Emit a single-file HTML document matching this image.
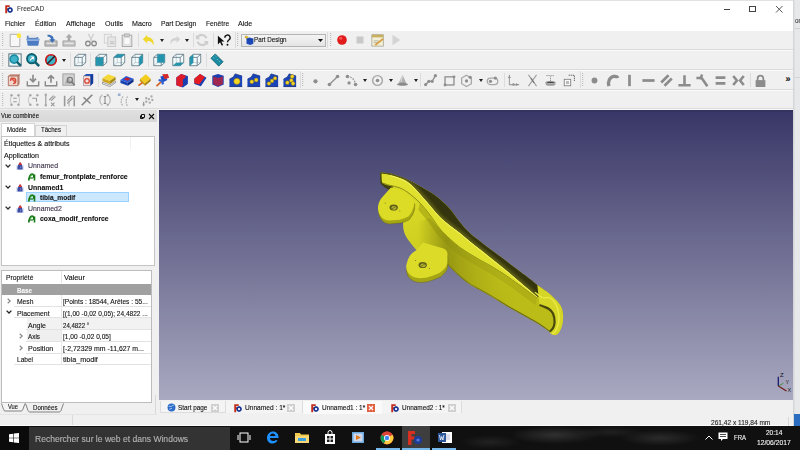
<!DOCTYPE html><html><head><meta charset="utf-8"><style>
*{box-sizing:border-box}
html,body{margin:0;padding:0}
body{width:800px;height:450px;overflow:hidden;position:relative;background:#f0f0f0;font-family:"Liberation Sans",sans-serif;color:#000}
.a{position:absolute;overflow:visible}
.t{position:absolute;white-space:nowrap;line-height:1;-webkit-text-stroke:0.12px currentColor}
</style></head><body>
<div class="a" style="left:0px;top:0px;width:793px;height:31px;background:#fff"></div>
<div class="a" style="left:0px;top:0px;width:793px;height:1px;background:#e2e2e2"></div>
<svg class="a" style="left:5px;top:5px" width="8" height="8" viewBox="0 0 10 10"><path d="M0.3 0.3h5.6v2.3H2.7v1.5h2.6v2.2H2.7v3.9H0.3z" fill="#c4301c"/><circle cx="6.3" cy="6.3" r="2.4" fill="#fff" stroke="#1a3692" stroke-width="1.9"/><path d="M6.3 2.9v1M6.3 8.7v1M2.9 6.3h1M8.7 6.3h1" stroke="#1a3692" stroke-width="1.2"/></svg>
<div class="t" style="left:16.90px;top:5.30px;font-size:7.8px;color:#3a3a3a;letter-spacing:0.000px;transform:scaleX(0.8336);transform-origin:0.00px 0;">FreeCAD</div>
<div class="a" style="left:723.5px;top:8.6px;width:6.5px;height:1px;background:#444"></div>
<div class="a" style="left:749px;top:5.5px;width:7px;height:6.5px;border:1px solid #444"></div>
<svg class="a" style="left:776px;top:5.5px" width="6.5" height="6.5" viewBox="0 0 6.5 6.5"><path d="M0 0L6.5 6.5M6.5 0L0 6.5" stroke="#444" stroke-width="0.9"/></svg>
<div class="t" style="left:4.75px;top:19.81px;font-size:7.9px;color:#141414;letter-spacing:0.000px;transform:scaleX(0.8541);transform-origin:0.00px 0;">Fichier</div>
<div class="t" style="left:34.75px;top:19.81px;font-size:7.9px;color:#141414;letter-spacing:0.000px;transform:scaleX(0.8755);transform-origin:0.00px 0;">Édition</div>
<div class="t" style="left:65.90px;top:19.81px;font-size:7.9px;color:#141414;letter-spacing:0.000px;transform:scaleX(0.8950);transform-origin:0.00px 0;">Affichage</div>
<div class="t" style="left:104.60px;top:19.81px;font-size:7.9px;color:#141414;letter-spacing:0.000px;transform:scaleX(0.8964);transform-origin:0.00px 0;">Outils</div>
<div class="t" style="left:132.20px;top:19.81px;font-size:7.9px;color:#141414;letter-spacing:0.000px;transform:scaleX(0.9022);transform-origin:0.00px 0;">Macro</div>
<div class="t" style="left:161.40px;top:19.81px;font-size:7.9px;color:#141414;letter-spacing:0.000px;transform:scaleX(0.8552);transform-origin:0.00px 0;">Part Design</div>
<div class="t" style="left:206.30px;top:19.81px;font-size:7.9px;color:#141414;letter-spacing:0.000px;transform:scaleX(0.8522);transform-origin:0.00px 0;">Fenêtre</div>
<div class="t" style="left:238.20px;top:19.81px;font-size:7.9px;color:#141414;letter-spacing:0.000px;transform:scaleX(0.8983);transform-origin:0.00px 0;">Aide</div>
<div class="a" style="left:0px;top:31px;width:793px;height:78px;background:#f0f0f0"></div>
<div class="a" style="left:0px;top:49px;width:793px;height:1px;background:#dadada"></div>
<div class="a" style="left:0px;top:50px;width:793px;height:1px;background:#fafafa"></div>
<div class="a" style="left:0px;top:69px;width:793px;height:1px;background:#dadada"></div>
<div class="a" style="left:0px;top:70px;width:793px;height:1px;background:#fafafa"></div>
<div class="a" style="left:0px;top:89px;width:793px;height:1px;background:#dadada"></div>
<div class="a" style="left:0px;top:90px;width:793px;height:1px;background:#fafafa"></div>
<div class="a" style="left:0px;top:108px;width:793px;height:1px;background:#dadada"></div>
<div class="a" style="left:0px;top:109px;width:793px;height:1px;background:#fafafa"></div>
<svg class="a" style="left:2px;top:33px" width="2" height="14" viewBox="0 0 2 14"><rect x="0" y="0" width="1.2" height="1" fill="#bdbdbd"/><rect x="0" y="2" width="1.2" height="1" fill="#bdbdbd"/><rect x="0" y="4" width="1.2" height="1" fill="#bdbdbd"/><rect x="0" y="6" width="1.2" height="1" fill="#bdbdbd"/><rect x="0" y="8" width="1.2" height="1" fill="#bdbdbd"/><rect x="0" y="10" width="1.2" height="1" fill="#bdbdbd"/><rect x="0" y="12" width="1.2" height="1" fill="#bdbdbd"/></svg>
<svg class="a" style="left:7.8px;top:33.0px" width="14" height="14" viewBox="0 0 16 16"><path d="M2.5 1.5h9l2 2v12h-11z" fill="#f7f7f7" stroke="#a8a8a8"/><circle cx="12.5" cy="3" r="2.6" fill="#ffe83a"/></svg>
<svg class="a" style="left:26.0px;top:33.0px" width="14" height="14" viewBox="0 0 16 16"><path d="M1 3h5l1.5 1.5H14v3H1z" fill="#5f88c8"/><path d="M0.5 6.5h15l-1.5 8h-12z" fill="#4d7bc2"/><path d="M1 7h14l-0.5 2H1.5z" fill="#8fb0e0"/><rect x="3" y="1.5" width="9" height="4" fill="#e8e8e8"/></svg>
<svg class="a" style="left:44.1px;top:33.0px" width="14" height="14" viewBox="0 0 16 16"><path d="M1 9h14v6H1z" fill="#bdbdbd" stroke="#8a8a8a" stroke-width="0.8"/><rect x="3" y="11" width="10" height="1.5" fill="#e4e4e4"/><path d="M4 2c5 0 7 2 7 5h2l-3.5 4-3.5-4h2c0-2-2-3-4-3z" fill="#3d70b8"/></svg>
<svg class="a" style="left:62.0px;top:33.0px" width="14" height="14" viewBox="0 0 16 16"><path d="M1 9h14v6H1z" fill="#c4c4c4" stroke="#9a9a9a" stroke-width="0.8"/><rect x="3" y="11" width="10" height="1.5" fill="#e8e8e8"/><path d="M8 1l4 4h-2.5v4h-3v-4H4z" fill="#a8a8a8"/></svg>
<svg class="a" style="left:84.0px;top:33.0px" width="14" height="14" viewBox="0 0 16 16"><path d="M5 1l4 8M11 1L7 9" stroke="#d0d0d0" stroke-width="1.5"/><circle cx="4.5" cy="12" r="2.6" fill="none" stroke="#8c8c8c" stroke-width="1.5"/><circle cx="11.5" cy="12" r="2.6" fill="none" stroke="#8c8c8c" stroke-width="1.5"/></svg>
<svg class="a" style="left:102.7px;top:33.0px" width="14" height="14" viewBox="0 0 16 16"><rect x="1.5" y="1.5" width="8" height="10" fill="#efefef" stroke="#cfcfcf"/><rect x="5.5" y="4.5" width="9" height="11" fill="#e6e6e6" stroke="#c8c8c8"/><path d="M8 10h5M8 12h5" stroke="#bdbdbd"/></svg>
<svg class="a" style="left:120.2px;top:33.0px" width="14" height="14" viewBox="0 0 16 16"><rect x="2.5" y="2.5" width="11" height="13" fill="#ececec" stroke="#a0a0a0"/><rect x="5" y="1" width="6" height="3" fill="#cfcfcf" stroke="#999" stroke-width="0.6"/><rect x="4.5" y="5.5" width="7" height="8" fill="#fafafa" stroke="#c0c0c0" stroke-width="0.6"/></svg>
<svg class="a" style="left:141.7px;top:33.0px" width="14" height="14" viewBox="0 0 16 16"><path d="M6 2L1 7l5 5V9c4 0 6 1.5 7 5.5c1.5-6-2-10-7-10z" fill="#f0d82a"/></svg>
<svg class="a" style="left:167.1px;top:33.0px" width="14" height="14" viewBox="0 0 16 16"><path d="M11 3l4 4-4 4V8.5c-4 0-6 1-7 5c-1-5 2-8 7-8z" fill="#d2d2d2"/></svg>
<svg class="a" style="left:195.4px;top:33.0px" width="14" height="14" viewBox="0 0 16 16"><path d="M13 6A5.5 5.5 0 0 0 3 5M3 10a5.5 5.5 0 0 0 10 1" stroke="#cdcdcd" stroke-width="2.5" fill="none"/><path d="M1 2v5h5zM15 14V9h-5z" fill="#cdcdcd"/></svg>
<svg class="a" style="left:217.4px;top:33.0px" width="14" height="14" viewBox="0 0 16 16"><path d="M1 3l0 10 2.5-2.5 2 4 1.5-.8-2-4H8.5z" fill="#111"/><path d="M9 5.5a3 3 0 1 1 4.5 2.5c-1 .6-1.5 1-1.5 2.5" stroke="#111" stroke-width="1.6" fill="none"/><circle cx="12" cy="13.5" r="1.1" fill="#111"/></svg>
<svg class="a" style="left:334.5px;top:33.0px" width="14" height="14" viewBox="0 0 16 16"><circle cx="8" cy="8" r="5.5" fill="#e11b1b"/><circle cx="6.5" cy="6" r="1.8" fill="#ff7070" opacity="0.7"/></svg>
<svg class="a" style="left:353.0px;top:33.0px" width="14" height="14" viewBox="0 0 16 16"><rect x="4" y="4" width="8" height="8" fill="#c9c9c9"/></svg>
<svg class="a" style="left:371.2px;top:33.0px" width="14" height="14" viewBox="0 0 16 16"><rect x="1" y="2" width="13" height="13" fill="#f4f0d8" stroke="#9a9a80" stroke-width="0.8"/><rect x="1" y="2" width="13" height="3" fill="#c8b060"/><path d="M4 13l9-7 1.5 1.5-9 7z" fill="#d6a040"/><path d="M3 9h6M3 11h4" stroke="#b0b0a0"/></svg>
<svg class="a" style="left:388.5px;top:33.0px" width="14" height="14" viewBox="0 0 16 16"><path d="M4 2l9 6-9 6z" fill="#d4d4d4"/></svg>
<svg class="a" style="left:159.5px;top:38.5px" width="4" height="3" viewBox="0 0 4 3"><path d="M0 0h4l-2 3z" fill="#222"/></svg>
<svg class="a" style="left:184.5px;top:38.5px" width="4" height="3" viewBox="0 0 4 3"><path d="M0 0h4l-2 3z" fill="#222"/></svg>
<div class="a" style="left:137.5px;top:33px;width:1px;height:14px;background:#dcdcdc"></div>
<div class="a" style="left:192.5px;top:33px;width:1px;height:14px;background:#dcdcdc"></div>
<div class="a" style="left:213px;top:33px;width:1px;height:14px;background:#dcdcdc"></div>
<div class="a" style="left:234.5px;top:32px;width:1px;height:16px;background:#dcdcdc"></div>
<svg class="a" style="left:237px;top:33px" width="2" height="14" viewBox="0 0 2 14"><rect x="0" y="0" width="1.2" height="1" fill="#bdbdbd"/><rect x="0" y="2" width="1.2" height="1" fill="#bdbdbd"/><rect x="0" y="4" width="1.2" height="1" fill="#bdbdbd"/><rect x="0" y="6" width="1.2" height="1" fill="#bdbdbd"/><rect x="0" y="8" width="1.2" height="1" fill="#bdbdbd"/><rect x="0" y="10" width="1.2" height="1" fill="#bdbdbd"/><rect x="0" y="12" width="1.2" height="1" fill="#bdbdbd"/></svg>
<div class="a" style="left:326.5px;top:32px;width:1px;height:16px;background:#dcdcdc"></div>
<svg class="a" style="left:330px;top:33px" width="2" height="14" viewBox="0 0 2 14"><rect x="0" y="0" width="1.2" height="1" fill="#bdbdbd"/><rect x="0" y="2" width="1.2" height="1" fill="#bdbdbd"/><rect x="0" y="4" width="1.2" height="1" fill="#bdbdbd"/><rect x="0" y="6" width="1.2" height="1" fill="#bdbdbd"/><rect x="0" y="8" width="1.2" height="1" fill="#bdbdbd"/><rect x="0" y="10" width="1.2" height="1" fill="#bdbdbd"/><rect x="0" y="12" width="1.2" height="1" fill="#bdbdbd"/></svg>
<div class="a" style="left:240.5px;top:33.5px;width:85px;height:13.5px;background:linear-gradient(#f4f4f4,#e4e4e4);border:1px solid #b4b4b4"></div>
<svg class="a" style="left:243.5px;top:35px" width="10" height="10" viewBox="0 0 16 16"><path d="M1 3l3-2 3 3-3 2z" fill="#e8c020" stroke="#806010" stroke-width="0.5"/><path d="M4 6l5-2 6 2v8l-5 2-6-2z" fill="#1d48b8"/><path d="M4 6l5 2 6-2" stroke="#0e2c80" stroke-width="0.8" fill="none"/></svg>
<div class="t" style="left:254.20px;top:35.70px;font-size:7.8px;color:#111;letter-spacing:0.000px;transform:scaleX(0.7999);transform-origin:0.00px 0;">Part Design</div>
<svg class="a" style="left:318px;top:39px" width="5" height="3" viewBox="0 0 5 3"><path d="M0 0h5l-2.5 3z" fill="#111"/></svg>
<svg class="a" style="left:2px;top:53px" width="2" height="14" viewBox="0 0 2 14"><rect x="0" y="0" width="1.2" height="1" fill="#bdbdbd"/><rect x="0" y="2" width="1.2" height="1" fill="#bdbdbd"/><rect x="0" y="4" width="1.2" height="1" fill="#bdbdbd"/><rect x="0" y="6" width="1.2" height="1" fill="#bdbdbd"/><rect x="0" y="8" width="1.2" height="1" fill="#bdbdbd"/><rect x="0" y="10" width="1.2" height="1" fill="#bdbdbd"/><rect x="0" y="12" width="1.2" height="1" fill="#bdbdbd"/></svg>
<svg class="a" style="left:7.6px;top:53.0px" width="14" height="14" viewBox="0 0 16 16"><rect x="1" y="1" width="14" height="14" fill="#eef6f8" stroke="#45606e" stroke-width="1"/><circle cx="7" cy="7" r="4.6" fill="#3fb3c9" stroke="#1b8ba3" stroke-width="1.8"/><path d="M10 10l4.5 4.5" stroke="#0e6070" stroke-width="2.8"/></svg>
<svg class="a" style="left:25.8px;top:53.0px" width="14" height="14" viewBox="0 0 16 16"><circle cx="6.5" cy="6.5" r="5.3" fill="#3fb3c9" stroke="#0e6070" stroke-width="2.2"/><path d="M4.5 8.5l4-4M5.5 4.5h3v3" stroke="#fff" stroke-width="1.2"/><path d="M10.5 10.5l4.5 4.5" stroke="#0e6070" stroke-width="3"/></svg>
<svg class="a" style="left:44.1px;top:53.0px" width="14" height="14" viewBox="0 0 16 16"><circle cx="8" cy="8" r="6" fill="#3fb3c9" stroke="#c11" stroke-width="1.8"/><path d="M3.5 12.5l9-9" stroke="#222" stroke-width="1.6"/></svg>
<svg class="a" style="left:72.5px;top:53.0px" width="14" height="14" viewBox="0 0 16 16"><path d="M2 5l4-3.5h8.5v9.5l-4 3.5H2z" fill="#f2fafc" stroke="#45606e" stroke-width="0.8"/><path d="M2 5h8.5v9.5M10.5 5l4-3.5" stroke="#45606e" stroke-width="0.8" fill="none"/><path d="M2 14.5l4-3.5h8.5M6 1.5V11" stroke="#45606e" stroke-width="0.5" fill="none" opacity="0.6"/></svg>
<svg class="a" style="left:94.0px;top:53.0px" width="14" height="14" viewBox="0 0 16 16"><path d="M2 5l4-3.5h8.5v9.5l-4 3.5H2z" fill="#f2fafc" stroke="#45606e" stroke-width="0.8"/><path d="M2 5h8.5v9.5M10.5 5l4-3.5" stroke="#45606e" stroke-width="0.8" fill="none"/><path d="M2 14.5l4-3.5h8.5M6 1.5V11" stroke="#45606e" stroke-width="0.5" fill="none" opacity="0.6"/><path d="M2 5h8.5v9.5H2z" fill="#2594ad"/></svg>
<svg class="a" style="left:112.2px;top:53.0px" width="14" height="14" viewBox="0 0 16 16"><path d="M2 5l4-3.5h8.5v9.5l-4 3.5H2z" fill="#f2fafc" stroke="#45606e" stroke-width="0.8"/><path d="M2 5h8.5v9.5M10.5 5l4-3.5" stroke="#45606e" stroke-width="0.8" fill="none"/><path d="M2 14.5l4-3.5h8.5M6 1.5V11" stroke="#45606e" stroke-width="0.5" fill="none" opacity="0.6"/><path d="M2 5l4-3.5h8.5l-4 3.5z" fill="#2594ad"/></svg>
<svg class="a" style="left:130.4px;top:53.0px" width="14" height="14" viewBox="0 0 16 16"><path d="M2 5l4-3.5h8.5v9.5l-4 3.5H2z" fill="#f2fafc" stroke="#45606e" stroke-width="0.8"/><path d="M2 5h8.5v9.5M10.5 5l4-3.5" stroke="#45606e" stroke-width="0.8" fill="none"/><path d="M2 14.5l4-3.5h8.5M6 1.5V11" stroke="#45606e" stroke-width="0.5" fill="none" opacity="0.6"/><path d="M10.5 5l4-3.5v9.5l-4 3.5z" fill="#2594ad"/></svg>
<svg class="a" style="left:152.1px;top:53.0px" width="14" height="14" viewBox="0 0 16 16"><path d="M2 5l4-3.5h8.5v9.5l-4 3.5H2z" fill="#f2fafc" stroke="#45606e" stroke-width="0.8"/><path d="M2 5h8.5v9.5M10.5 5l4-3.5" stroke="#45606e" stroke-width="0.8" fill="none"/><path d="M2 14.5l4-3.5h8.5M6 1.5V11" stroke="#45606e" stroke-width="0.5" fill="none" opacity="0.6"/><path d="M6 1.5h8.5V11H6z" fill="#2594ad"/></svg>
<svg class="a" style="left:170.6px;top:53.0px" width="14" height="14" viewBox="0 0 16 16"><path d="M2 5l4-3.5h8.5v9.5l-4 3.5H2z" fill="#f2fafc" stroke="#45606e" stroke-width="0.8"/><path d="M2 5h8.5v9.5M10.5 5l4-3.5" stroke="#45606e" stroke-width="0.8" fill="none"/><path d="M2 14.5l4-3.5h8.5M6 1.5V11" stroke="#45606e" stroke-width="0.5" fill="none" opacity="0.6"/><path d="M2 14.5l4-3.5h8.5l-4 3.5z" fill="#2594ad"/></svg>
<svg class="a" style="left:188.3px;top:53.0px" width="14" height="14" viewBox="0 0 16 16"><path d="M2 5l4-3.5h8.5v9.5l-4 3.5H2z" fill="#f2fafc" stroke="#45606e" stroke-width="0.8"/><path d="M2 5h8.5v9.5M10.5 5l4-3.5" stroke="#45606e" stroke-width="0.8" fill="none"/><path d="M2 14.5l4-3.5h8.5M6 1.5V11" stroke="#45606e" stroke-width="0.5" fill="none" opacity="0.6"/><path d="M2 5l4-3.5V11l-4 3.5z" fill="#2594ad"/></svg>
<svg class="a" style="left:210.1px;top:53.0px" width="14" height="14" viewBox="0 0 16 16"><path d="M1 6l5-5 9 9-5 5z" fill="#1b8ba3" stroke="#0e5566" stroke-width="0.8"/><path d="M4 5l1 1M6 3l1 1M8 7l1 1M10 9l1 1" stroke="#a8e0ea" stroke-width="0.8"/></svg>
<svg class="a" style="left:61.5px;top:58.5px" width="4" height="3" viewBox="0 0 4 3"><path d="M0 0h4l-2 3z" fill="#222"/></svg>
<div class="a" style="left:69.5px;top:53px;width:1px;height:14px;background:#dcdcdc"></div>
<div class="a" style="left:90px;top:53px;width:1px;height:14px;background:#dcdcdc"></div>
<div class="a" style="left:148px;top:53px;width:1px;height:14px;background:#dcdcdc"></div>
<div class="a" style="left:206px;top:53px;width:1px;height:14px;background:#dcdcdc"></div>
<svg class="a" style="left:2px;top:73px" width="2" height="14" viewBox="0 0 2 14"><rect x="0" y="0" width="1.2" height="1" fill="#bdbdbd"/><rect x="0" y="2" width="1.2" height="1" fill="#bdbdbd"/><rect x="0" y="4" width="1.2" height="1" fill="#bdbdbd"/><rect x="0" y="6" width="1.2" height="1" fill="#bdbdbd"/><rect x="0" y="8" width="1.2" height="1" fill="#bdbdbd"/><rect x="0" y="10" width="1.2" height="1" fill="#bdbdbd"/><rect x="0" y="12" width="1.2" height="1" fill="#bdbdbd"/></svg>
<svg class="a" style="left:7.4px;top:73.0px" width="14" height="14" viewBox="0 0 16 16"><path d="M1.5 3.5l2-2h11v11l-2 2h-11z" fill="#c89080"/><path d="M1.5 3.5h11v11h-11z" fill="#f2d6cc" stroke="#9a5a4a" stroke-width="0.8"/><path d="M12.5 3.5l2-2" stroke="#9a5a4a" stroke-width="0.8"/><path d="M4 9a3 3 0 1 1 3 3M4.5 5.5l5 5" stroke="#d84a3a" stroke-width="1.5" fill="none"/></svg>
<svg class="a" style="left:25.8px;top:73.0px" width="14" height="14" viewBox="0 0 16 16"><path d="M1.5 9.5v5h13v-5" fill="none" stroke="#8a8a8a" stroke-width="1.6"/><path d="M8 2v7.5M4.5 6.5l3.5 3.5 3.5-3.5" stroke="#8a8a8a" stroke-width="1.9" fill="none"/></svg>
<svg class="a" style="left:44.0px;top:73.0px" width="14" height="14" viewBox="0 0 16 16"><path d="M1.5 9.5v5h13v-5" fill="none" stroke="#8a8a8a" stroke-width="1.6"/><path d="M8 11V3.5M4.5 6.5L8 3l3.5 3.5" stroke="#8a8a8a" stroke-width="1.9" fill="none"/></svg>
<svg class="a" style="left:62.0px;top:73.0px" width="14" height="14" viewBox="0 0 16 16"><rect x="1" y="1" width="13" height="13" fill="#d2d2d2" stroke="#9a9a9a"/><path d="M3 12l4-7 3 4 2-2 1 5z" fill="#a8a8a8"/><circle cx="9" cy="8" r="3" fill="none" stroke="#7a7a7a" stroke-width="1.3"/><path d="M11 10l3.5 4" stroke="#7a7a7a" stroke-width="1.8"/></svg>
<svg class="a" style="left:80.2px;top:73.0px" width="14" height="14" viewBox="0 0 16 16"><path d="M4 3.5l3-2.5h8v10.5l-3 3H4z" fill="#1d4fc0"/><path d="M4 3.5h8v11H4z" fill="#f2e2dc" stroke="#b08070" stroke-width="0.5"/><circle cx="8" cy="9" r="2.6" fill="none" stroke="#d84030" stroke-width="1.5"/><path d="M12 3.5l3-2.5v10.5l-3 3z" fill="#123a9a"/></svg>
<svg class="a" style="left:101.8px;top:73.0px" width="14" height="14" viewBox="0 0 16 16"><path d="M0.5 6l6.5-4.5 8.5 3-6.5 4.5z" fill="#f4d838"/><path d="M0.5 6v3.5l8.5 3V9z" fill="#d0a820"/><path d="M9 9v3.5l6.5-4.5V4.5z" fill="#a88a10"/><path d="M0.5 10.5v2l8.5 3 6.5-4.5v-1.5l-6.5 4.2z" fill="#fafafa" stroke="#555" stroke-width="0.6"/></svg>
<svg class="a" style="left:119.8px;top:73.0px" width="14" height="14" viewBox="0 0 16 16"><path d="M0.5 8l6.5-4.5 8.5 3-6.5 4.5z" fill="#2a5bd8"/><path d="M4.5 7.2l3-2 4.5 1.5-3 2.1z" fill="#c81e28"/><path d="M0.5 8v3.5l8.5 3V11z" fill="#1a42b0"/><path d="M9 11v3.5l6.5-4.5V6.5z" fill="#0e2e88"/></svg>
<svg class="a" style="left:137.9px;top:73.0px" width="14" height="14" viewBox="0 0 16 16"><path d="M2.5 6.5l6.5-5 5.5 5-6.5 5.5z" fill="#f4cc20"/><path d="M2.5 6.5l5.5 5.5v2.5L2 9z" fill="#c89a10"/><path d="M8 12l6.5-5.5v2.5L8 14.5z" fill="#a88008"/><path d="M0.5 14.5l4.5-3.5" stroke="#d86018" stroke-width="1.8"/></svg>
<svg class="a" style="left:156.1px;top:73.0px" width="14" height="14" viewBox="0 0 16 16"><path d="M5 4l6-1.5 2 5.5-6 3z" fill="#1d50c8"/><path d="M7 1.5l6.5-.5 1.5 4.5-5 1.5z" fill="#d42a2a"/><path d="M0.5 15l6-5.5" stroke="#d06020" stroke-width="1.8"/><path d="M3 8l4 1 1 4" stroke="#2a60d8" stroke-width="2.5" fill="none"/></svg>
<svg class="a" style="left:174.8px;top:73.0px" width="14" height="14" viewBox="0 0 16 16"><path d="M1.5 5l5.5-4 7.5 2.5v9l-5.5 4-7.5-2.5z" fill="#1b4cc8"/><path d="M1.5 5l5.5-4 5 1.8v9.2L7 16 1.5 14z" fill="#dc1c2a"/><path d="M9 16l5.5-4V3.5L9 7.5z" fill="#1b3fb0"/></svg>
<svg class="a" style="left:192.7px;top:73.0px" width="14" height="14" viewBox="0 0 16 16"><path d="M1.5 6.5l6.5-5.5 7.5 4.5-6.5 9.5-7.5-2.5z" fill="#1b3fb0"/><path d="M1.5 6.5l6.5-5.5 5.5 3.5-6.5 8.5-5.5-1.5z" fill="#e41c22"/></svg>
<svg class="a" style="left:210.7px;top:73.0px" width="14" height="14" viewBox="0 0 16 16"><path d="M1.5 3l6.5-2 6.5 2v10l-6.5 3-6.5-3z" fill="#1b3fb0"/><path d="M2.5 4l5.5 1.8 5.5-1.8v8.5l-5.5 2.6-5.5-2.6z" fill="#a02850"/></svg>
<svg class="a" style="left:228.9px;top:73.0px" width="14" height="14" viewBox="0 0 16 16"><path d="M0.5 7l4.5-2.5 2-3.5 8 2.5v12h-14.5z" fill="#1a44b8"/><path d="M0.5 7l4.5-2.5 2-3.5 8 2.5" stroke="#0c2a80" stroke-width="0.8" fill="none"/><path d="M0.5 15.5h14.5" stroke="#0c2a80" stroke-width="1"/><circle cx="9" cy="9.5" r="3.6" fill="#f4d424" stroke="#806a10" stroke-width="0.5"/></svg>
<svg class="a" style="left:246.9px;top:73.0px" width="14" height="14" viewBox="0 0 16 16"><path d="M0.5 7l4.5-2.5 2-3.5 8 2.5v12h-14.5z" fill="#1a44b8"/><path d="M0.5 7l4.5-2.5 2-3.5 8 2.5" stroke="#0c2a80" stroke-width="0.8" fill="none"/><path d="M0.5 15.5h14.5" stroke="#0c2a80" stroke-width="1"/><circle cx="5.5" cy="10" r="2.3" fill="#f4d424" stroke="#806a10" stroke-width="0.5"/><circle cx="10.5" cy="8" r="2.3" fill="#f4d424" stroke="#806a10" stroke-width="0.5"/></svg>
<svg class="a" style="left:264.9px;top:73.0px" width="14" height="14" viewBox="0 0 16 16"><path d="M0.5 7l4.5-2.5 2-3.5 8 2.5v12h-14.5z" fill="#1a44b8"/><path d="M0.5 7l4.5-2.5 2-3.5 8 2.5" stroke="#0c2a80" stroke-width="0.8" fill="none"/><path d="M0.5 15.5h14.5" stroke="#0c2a80" stroke-width="1"/><circle cx="4.5" cy="12" r="2.1" fill="#f4d424" stroke="#806a10" stroke-width="0.5"/><circle cx="8" cy="9" r="2.1" fill="#f4d424" stroke="#806a10" stroke-width="0.5"/><circle cx="11.5" cy="6" r="2.1" fill="#f4d424" stroke="#806a10" stroke-width="0.5"/></svg>
<svg class="a" style="left:283.2px;top:73.0px" width="14" height="14" viewBox="0 0 16 16"><path d="M0.5 7l4.5-2.5 2-3.5 8 2.5v12h-14.5z" fill="#1a44b8"/><path d="M0.5 7l4.5-2.5 2-3.5 8 2.5" stroke="#0c2a80" stroke-width="0.8" fill="none"/><path d="M0.5 15.5h14.5" stroke="#0c2a80" stroke-width="1"/><circle cx="5" cy="11" r="2.2" fill="#f4d424" stroke="#806a10" stroke-width="0.5"/><circle cx="9.5" cy="8.5" r="2.2" fill="#f4d424" stroke="#806a10" stroke-width="0.5"/><circle cx="11.5" cy="12" r="2.2" fill="#f4d424" stroke="#806a10" stroke-width="0.5"/><circle cx="10.5" cy="4" r="2.2" fill="#f4d424" stroke="#806a10" stroke-width="0.5"/></svg>
<svg class="a" style="left:309.0px;top:73.5px" width="13" height="13" viewBox="0 0 16 16"><circle cx="8" cy="9" r="2.6" fill="#8e8e8e"/></svg>
<svg class="a" style="left:327.2px;top:73.5px" width="13" height="13" viewBox="0 0 16 16"><path d="M3 13L13 3" stroke="#8e8e8e" stroke-width="1.6"/><circle cx="3" cy="13" r="2.2" fill="#8e8e8e"/><circle cx="13" cy="3" r="2.2" fill="#8e8e8e"/></svg>
<svg class="a" style="left:345.2px;top:73.5px" width="13" height="13" viewBox="0 0 16 16"><path d="M3 3c5 0 9 4 10 10" stroke="#8e8e8e" stroke-width="1.5" fill="none" stroke-dasharray="2 1.5"/><circle cx="3" cy="3" r="2.2" fill="#8e8e8e"/><circle cx="13" cy="13" r="2.2" fill="#8e8e8e"/><circle cx="5" cy="11" r="2" fill="#8e8e8e"/></svg>
<svg class="a" style="left:370.7px;top:73.5px" width="13" height="13" viewBox="0 0 16 16"><circle cx="8" cy="8" r="6" stroke="#a8a8a8" stroke-width="1.8" fill="none"/><circle cx="8" cy="8" r="2.2" fill="#8e8e8e"/></svg>
<svg class="a" style="left:396.2px;top:73.5px" width="13" height="13" viewBox="0 0 16 16"><path d="M8 1L3 12h10z" fill="#b0b0b0"/><path d="M1 13c2-3 12-3 14 0-2 2-12 2-14 0z" fill="#8a8a8a"/><path d="M8 2l-2 8" stroke="#e0e0e0" stroke-width="1.2"/></svg>
<svg class="a" style="left:424.1px;top:73.5px" width="13" height="13" viewBox="0 0 16 16"><path d="M2 13l4-4 4 0 4-7" stroke="#8e8e8e" stroke-width="1.6" fill="none"/><circle cx="2" cy="13" r="2" fill="#8e8e8e"/><circle cx="6" cy="9" r="2" fill="#8e8e8e"/><circle cx="10" cy="9" r="2" fill="#8e8e8e"/><circle cx="14" cy="2" r="2" fill="#8e8e8e"/></svg>
<svg class="a" style="left:442.9px;top:73.5px" width="13" height="13" viewBox="0 0 16 16"><rect x="2.5" y="3.5" width="11" height="10" stroke="#8e8e8e" stroke-width="1.6" fill="none"/><circle cx="2.5" cy="13.5" r="1.8" fill="#8e8e8e"/><circle cx="13.5" cy="3.5" r="1.8" fill="#8e8e8e"/></svg>
<svg class="a" style="left:460.1px;top:73.5px" width="13" height="13" viewBox="0 0 16 16"><path d="M8 1.5l6 3.5v7l-6 3.5-6-3.5v-7z" stroke="#a8a8a8" stroke-width="1.6" fill="none"/><circle cx="8" cy="8.5" r="2" fill="#8e8e8e"/><circle cx="12.5" cy="4" r="2" fill="#8e8e8e"/></svg>
<svg class="a" style="left:485.9px;top:73.5px" width="13" height="13" viewBox="0 0 16 16"><rect x="1.5" y="5" width="13" height="8" rx="4" stroke="#a8a8a8" stroke-width="1.6" fill="none"/><circle cx="5.5" cy="9" r="2" fill="#8e8e8e"/><circle cx="11.5" cy="5" r="2" fill="#8e8e8e"/></svg>
<svg class="a" style="left:507.0px;top:73.5px" width="13" height="13" viewBox="0 0 16 16"><path d="M3 1v12h12" stroke="#a0a0a0" stroke-width="1.4" fill="none"/><path d="M3 2l-2 3h4zM14 13l-3 2v-4z" fill="#8e8e8e"/><circle cx="8" cy="13" r="1.5" fill="#8e8e8e"/></svg>
<svg class="a" style="left:526.2px;top:73.5px" width="13" height="13" viewBox="0 0 16 16"><path d="M3 1l10 14M13 1L3 15" stroke="#a0a0a0" stroke-width="1.4"/><path d="M6 5l4 6" stroke="#777" stroke-width="1.4"/></svg>
<svg class="a" style="left:543.9px;top:73.5px" width="13" height="13" viewBox="0 0 16 16"><path d="M2 10c0-2 12-2 12 0v3c0 2-12 2-12 0z" fill="#9a9a9a"/><path d="M2 10c0 2 12 2 12 0" stroke="#ddd"/><path d="M8 9V3M3 2h10" stroke="#888" stroke-width="1.2" stroke-dasharray="1.5 1"/></svg>
<svg class="a" style="left:562.6px;top:73.5px" width="13" height="13" viewBox="0 0 16 16"><rect x="1.5" y="6.5" width="8" height="8" fill="#fff" stroke="#777"/><rect x="3.5" y="8.5" width="4" height="4" fill="#bbb"/><path d="M7 1.5h7v7" stroke="#555" stroke-width="1.2" stroke-dasharray="1.5 1" fill="none"/></svg>
<svg class="a" style="left:587.5px;top:73.5px" width="13" height="13" viewBox="0 0 16 16"><circle cx="8" cy="8" r="3.6" fill="#8c8c8c"/></svg>
<svg class="a" style="left:606.1px;top:73.5px" width="13" height="13" viewBox="0 0 16 16"><path d="M3.5 15c-1.5-6 1-11 6-12 3-.5 4.5 .5 5 2" stroke="#8c8c8c" stroke-width="4" fill="none"/></svg>
<svg class="a" style="left:623.2px;top:73.5px" width="13" height="13" viewBox="0 0 16 16"><path d="M8 1v14" stroke="#8c8c8c" stroke-width="3.4"/></svg>
<svg class="a" style="left:641.9px;top:73.5px" width="13" height="13" viewBox="0 0 16 16"><path d="M0.5 8h15" stroke="#8c8c8c" stroke-width="3.4"/></svg>
<svg class="a" style="left:659.9px;top:73.5px" width="13" height="13" viewBox="0 0 16 16"><path d="M1.5 10.5l9-9M5.5 14.5l9-9" stroke="#8c8c8c" stroke-width="3.2"/></svg>
<svg class="a" style="left:678.2px;top:73.5px" width="13" height="13" viewBox="0 0 16 16"><path d="M8 1.5v11M0.5 13.8h15" stroke="#8c8c8c" stroke-width="3.2"/></svg>
<svg class="a" style="left:695.9px;top:73.5px" width="13" height="13" viewBox="0 0 16 16"><path d="M0.5 5h6.5l7 10" stroke="#8c8c8c" stroke-width="3.2" fill="none"/><path d="M7.5 0.5l-2.5 6" stroke="#8c8c8c" stroke-width="3"/></svg>
<svg class="a" style="left:714.0px;top:73.5px" width="13" height="13" viewBox="0 0 16 16"><path d="M2 4.5h12M2 11.5h12" stroke="#8c8c8c" stroke-width="3.4"/></svg>
<svg class="a" style="left:732.2px;top:73.5px" width="13" height="13" viewBox="0 0 16 16"><path d="M1.5 2.5l4.5 5.5-4.5 5.5M14.5 2.5l-4.5 5.5 4.5 5.5" stroke="#8c8c8c" stroke-width="3.2" fill="none"/></svg>
<svg class="a" style="left:754.2px;top:73.5px" width="13" height="13" viewBox="0 0 16 16"><path d="M4.5 8V5.5a3.5 3.5 0 0 1 7 0V8" stroke="#8c8c8c" stroke-width="2.2" fill="none"/><rect x="2" y="7.5" width="12" height="8.5" fill="#8c8c8c"/></svg>
<svg class="a" style="left:363px;top:78.5px" width="4" height="3" viewBox="0 0 4 3"><path d="M0 0h4l-2 3z" fill="#222"/></svg>
<svg class="a" style="left:388.5px;top:78.5px" width="4" height="3" viewBox="0 0 4 3"><path d="M0 0h4l-2 3z" fill="#222"/></svg>
<svg class="a" style="left:413.5px;top:78.5px" width="4" height="3" viewBox="0 0 4 3"><path d="M0 0h4l-2 3z" fill="#222"/></svg>
<svg class="a" style="left:478.5px;top:78.5px" width="4" height="3" viewBox="0 0 4 3"><path d="M0 0h4l-2 3z" fill="#222"/></svg>
<div class="a" style="left:98px;top:73px;width:1px;height:14px;background:#dcdcdc"></div>
<div class="a" style="left:419.7px;top:73px;width:1px;height:14px;background:#dcdcdc"></div>
<div class="a" style="left:503.7px;top:73px;width:1px;height:14px;background:#dcdcdc"></div>
<div class="a" style="left:749.5px;top:73px;width:1px;height:14px;background:#dcdcdc"></div>
<div class="a" style="left:299.5px;top:71px;width:1px;height:17px;background:#dcdcdc"></div>
<svg class="a" style="left:302px;top:73px" width="2" height="14" viewBox="0 0 2 14"><rect x="0" y="0" width="1.2" height="1" fill="#bdbdbd"/><rect x="0" y="2" width="1.2" height="1" fill="#bdbdbd"/><rect x="0" y="4" width="1.2" height="1" fill="#bdbdbd"/><rect x="0" y="6" width="1.2" height="1" fill="#bdbdbd"/><rect x="0" y="8" width="1.2" height="1" fill="#bdbdbd"/><rect x="0" y="10" width="1.2" height="1" fill="#bdbdbd"/><rect x="0" y="12" width="1.2" height="1" fill="#bdbdbd"/></svg>
<div class="a" style="left:579.5px;top:71px;width:1px;height:17px;background:#dcdcdc"></div>
<svg class="a" style="left:582px;top:73px" width="2" height="14" viewBox="0 0 2 14"><rect x="0" y="0" width="1.2" height="1" fill="#bdbdbd"/><rect x="0" y="2" width="1.2" height="1" fill="#bdbdbd"/><rect x="0" y="4" width="1.2" height="1" fill="#bdbdbd"/><rect x="0" y="6" width="1.2" height="1" fill="#bdbdbd"/><rect x="0" y="8" width="1.2" height="1" fill="#bdbdbd"/><rect x="0" y="10" width="1.2" height="1" fill="#bdbdbd"/><rect x="0" y="12" width="1.2" height="1" fill="#bdbdbd"/></svg>
<div class="t" style="left:785.5px;top:75.3px;font-size:9px;color:#111;font-weight:bold">»</div>
<svg class="a" style="left:2px;top:93px" width="2" height="14" viewBox="0 0 2 14"><rect x="0" y="0" width="1.2" height="1" fill="#bdbdbd"/><rect x="0" y="2" width="1.2" height="1" fill="#bdbdbd"/><rect x="0" y="4" width="1.2" height="1" fill="#bdbdbd"/><rect x="0" y="6" width="1.2" height="1" fill="#bdbdbd"/><rect x="0" y="8" width="1.2" height="1" fill="#bdbdbd"/><rect x="0" y="10" width="1.2" height="1" fill="#bdbdbd"/><rect x="0" y="12" width="1.2" height="1" fill="#bdbdbd"/></svg>
<svg class="a" style="left:8.3px;top:92.5px" width="14" height="14" viewBox="0 0 16 16"><path d="M5 2c-3 3-3 9 0 12M11 2c3 3 3 9 0 12" stroke="#c8c8c8" stroke-width="1.2" fill="none"/><circle cx="4" cy="2.5" r="1.4" fill="#a8a8a8"/><circle cx="12" cy="2.5" r="1.4" fill="#a8a8a8"/><circle cx="4" cy="13.5" r="1.4" fill="#a8a8a8"/><circle cx="12" cy="13.5" r="1.4" fill="#a8a8a8"/><path d="M6 6h4M6 10h4" stroke="#999" stroke-width="1.2"/></svg>
<svg class="a" style="left:25.5px;top:92.5px" width="14" height="14" viewBox="0 0 16 16"><path d="M5 2c-3 3-3 9 0 12" stroke="#c8c8c8" stroke-width="1.2" fill="none"/><circle cx="5" cy="2.5" r="1.4" fill="#a8a8a8"/><circle cx="13" cy="2.5" r="1.4" fill="#a8a8a8"/><circle cx="5" cy="13.5" r="1.4" fill="#a8a8a8"/><circle cx="13" cy="13.5" r="1.4" fill="#a8a8a8"/><path d="M7 6h5M12 6v4" stroke="#999" stroke-width="1.2"/></svg>
<svg class="a" style="left:44.2px;top:92.5px" width="14" height="14" viewBox="0 0 16 16"><path d="M2 2v12" stroke="#a8a8a8" stroke-width="1.5"/><circle cx="2" cy="2" r="1.4" fill="#a8a8a8"/><circle cx="2" cy="14" r="1.4" fill="#a8a8a8"/><path d="M6 8l5-5M8 9l5-5" stroke="#999" stroke-width="1.3"/><path d="M8 11l4 4M12 11l-4 4" stroke="#999" stroke-width="1.2"/></svg>
<svg class="a" style="left:61.8px;top:92.5px" width="14" height="14" viewBox="0 0 16 16"><path d="M3 3v12M14 3v12" stroke="#999" stroke-width="1.8"/><path d="M6 9l6-6M6 12l6-6" stroke="#999" stroke-width="1.3"/><path d="M8 9v6" stroke="#aaa" stroke-width="1.2"/></svg>
<svg class="a" style="left:80.1px;top:92.5px" width="14" height="14" viewBox="0 0 16 16"><path d="M2 14L14 2" stroke="#888" stroke-width="2"/><path d="M4 5l8 7" stroke="#888" stroke-width="1.6"/></svg>
<svg class="a" style="left:98.0px;top:92.5px" width="14" height="14" viewBox="0 0 16 16"><path d="M5 2c-4 3-4 9 0 12M11 2c4 3 4 9 0 12" stroke="#b8b8b8" stroke-width="1.4" fill="none"/><path d="M8 4v8M6.5 4h3M6.5 12h3" stroke="#888" stroke-width="1.2"/><circle cx="11" cy="2.5" r="1.3" fill="#a8a8a8"/><circle cx="11" cy="13.5" r="1.3" fill="#a8a8a8"/></svg>
<svg class="a" style="left:117.0px;top:92.5px" width="14" height="14" viewBox="0 0 16 16"><rect x="1" y="0.5" width="3" height="3" fill="#9ab0d0"/><path d="M7 4c-3 3-3 8 0 11M12 4c-2 3-2 8 0 11" stroke="#b0b0b0" stroke-width="1.4" fill="none" stroke-dasharray="2 1"/></svg>
<svg class="a" style="left:141.3px;top:92.5px" width="14" height="14" viewBox="0 0 16 16"><circle cx="3" cy="13" r="1.3" fill="#a8a8a8"/><circle cx="6" cy="10" r="1.3" fill="#a8a8a8"/><circle cx="9" cy="7" r="1.3" fill="#a8a8a8"/><circle cx="12" cy="4" r="1.3" fill="#a8a8a8"/><circle cx="6" cy="6" r="1.3" fill="#a8a8a8"/><circle cx="10" cy="11" r="1.3" fill="#a8a8a8"/><circle cx="13" cy="8" r="1.3" fill="#a8a8a8"/><path d="M3 10v5" stroke="#999" stroke-width="1.2"/></svg>
<svg class="a" style="left:134.5px;top:98px" width="4" height="3" viewBox="0 0 4 3"><path d="M0 0h4l-2 3z" fill="#222"/></svg>
<div class="a" style="left:0px;top:109px;width:159px;height:305px;background:#f0f0f0"></div>
<div class="a" style="left:0px;top:110px;width:157px;height:11.5px;background:linear-gradient(#e0e0e0,#d8d8d8)"></div>
<div class="t" style="left:1.00px;top:112.15px;font-size:7.5px;color:#111;letter-spacing:0.000px;transform:scaleX(0.7971);transform-origin:0.00px 0;">Vue combinée</div>
<svg class="a" style="left:140px;top:113.5px" width="5" height="5" viewBox="0 0 5 5"><path d="M1.5 0.5h3v3h-3z M0.5 1.5v3h3" stroke="#111" stroke-width="1" fill="none"/></svg>
<svg class="a" style="left:149px;top:114px" width="5" height="5" viewBox="0 0 5 5"><path d="M0 0L5 5M5 0L0 5" stroke="#111" stroke-width="1.1"/></svg>
<div class="a" style="left:35px;top:124.5px;width:31.5px;height:12px;background:#f0f0f0;border:1px solid #d4d4d4;border-bottom:none"></div>
<div class="a" style="left:1px;top:123px;width:34px;height:13.5px;background:#fff;border:1px solid #d4d4d4;border-bottom:none"></div>
<div class="t" style="left:6.80px;top:125.70px;font-size:7.8px;color:#111;letter-spacing:0.000px;transform:scaleX(0.7700);transform-origin:0.00px 0;">Modèle</div>
<div class="t" style="left:40.50px;top:126.20px;font-size:7.8px;color:#111;letter-spacing:0.000px;transform:scaleX(0.7820);transform-origin:0.00px 0;">Tâches</div>
<div class="a" style="left:1px;top:136px;width:154px;height:129.5px;background:#fff;border:1px solid #c4c4c4"></div>
<div class="a" style="left:129.5px;top:137px;width:1px;height:12px;background:#f0f0f0"></div>
<div class="t" style="left:4.00px;top:140.40px;font-size:7.8px;color:#111;letter-spacing:0.000px;transform:scaleX(0.9101);transform-origin:0.00px 0;">Étiquettes &amp; attributs</div>
<div class="t" style="left:4.00px;top:151.90px;font-size:7.8px;color:#111;letter-spacing:0.000px;transform:scaleX(0.9172);transform-origin:0.00px 0;">Application</div>
<svg class="a" style="left:4.7px;top:163.8px" width="6" height="4" viewBox="0 0 6 4"><path d="M0.6 0.6L3 3l2.4-2.4" stroke="#2a2a2a" stroke-width="1.3" fill="none"/></svg>
<svg class="a" style="left:16.3px;top:161.4px" width="8" height="9" viewBox="0 0 8 9"><rect x="0" y="4" width="8" height="5" fill="#dce6f6"/><path d="M1.5 8.5C1 6 2 3 4 1.5 6 3 7 6 6.5 8.5z" fill="#3c4aa0"/><path d="M2.5 4C3 2.5 3.5 1.5 4 1 5 1.8 5.5 2.6 6 4z" fill="#d23434"/><path d="M4 5l1.5 1-1 2z" fill="#7a8ad8"/></svg>
<div class="t" style="left:28.00px;top:162.40px;font-size:7.8px;color:#3a3048;letter-spacing:0.000px;transform:scaleX(0.8870);transform-origin:0.00px 0;">Unnamed</div>
<svg class="a" style="left:27.6px;top:172.6px" width="8" height="8" viewBox="0 0 8 8"><path d="M0.8 7.5C1 4 2.5 1 4 1S6 3 6 5" stroke="#157a15" stroke-width="1.7" fill="none"/><path d="M1.5 5H5" stroke="#157a15" stroke-width="1.2"/><path d="M6.5 1.5V7.5" stroke="#157a15" stroke-width="1.6"/><circle cx="3.5" cy="2.5" r="0.8" fill="#5ac85a"/></svg>
<div class="t" style="left:40.20px;top:173.10px;font-size:7.8px;color:#111;letter-spacing:0.000px;transform:scaleX(0.9003);transform-origin:0.00px 0;font-weight:bold;">femur_frontplate_renforce</div>
<svg class="a" style="left:4.7px;top:185.0px" width="6" height="4" viewBox="0 0 6 4"><path d="M0.6 0.6L3 3l2.4-2.4" stroke="#2a2a2a" stroke-width="1.3" fill="none"/></svg>
<svg class="a" style="left:16.3px;top:182.6px" width="8" height="9" viewBox="0 0 8 9"><rect x="0" y="4" width="8" height="5" fill="#dce6f6"/><path d="M1.5 8.5C1 6 2 3 4 1.5 6 3 7 6 6.5 8.5z" fill="#3c4aa0"/><path d="M2.5 4C3 2.5 3.5 1.5 4 1 5 1.8 5.5 2.6 6 4z" fill="#d23434"/><path d="M4 5l1.5 1-1 2z" fill="#7a8ad8"/></svg>
<div class="t" style="left:28.20px;top:183.60px;font-size:7.8px;color:#111;letter-spacing:0.000px;transform:scaleX(0.8853);transform-origin:0.00px 0;font-weight:bold;">Unnamed1</div>
<div class="a" style="left:26.3px;top:191.7px;width:103.1px;height:10.1px;background:#cce8ff;border:1px solid #99d1ff"></div>
<svg class="a" style="left:27.6px;top:193.6px" width="8" height="8" viewBox="0 0 8 8"><path d="M0.8 7.5C1 4 2.5 1 4 1S6 3 6 5" stroke="#157a15" stroke-width="1.7" fill="none"/><path d="M1.5 5H5" stroke="#157a15" stroke-width="1.2"/><path d="M6.5 1.5V7.5" stroke="#157a15" stroke-width="1.6"/><circle cx="3.5" cy="2.5" r="0.8" fill="#5ac85a"/></svg>
<div class="t" style="left:40.20px;top:194.10px;font-size:7.8px;color:#111;letter-spacing:0.000px;transform:scaleX(0.8481);transform-origin:0.00px 0;font-weight:bold;">tibia_modif</div>
<svg class="a" style="left:4.7px;top:206.3px" width="6" height="4" viewBox="0 0 6 4"><path d="M0.6 0.6L3 3l2.4-2.4" stroke="#2a2a2a" stroke-width="1.3" fill="none"/></svg>
<svg class="a" style="left:16.3px;top:203.9px" width="8" height="9" viewBox="0 0 8 9"><rect x="0" y="4" width="8" height="5" fill="#dce6f6"/><path d="M1.5 8.5C1 6 2 3 4 1.5 6 3 7 6 6.5 8.5z" fill="#3c4aa0"/><path d="M2.5 4C3 2.5 3.5 1.5 4 1 5 1.8 5.5 2.6 6 4z" fill="#d23434"/><path d="M4 5l1.5 1-1 2z" fill="#7a8ad8"/></svg>
<div class="t" style="left:28.20px;top:204.90px;font-size:7.8px;color:#3a3048;letter-spacing:0.000px;transform:scaleX(0.8858);transform-origin:0.00px 0;">Unnamed2</div>
<svg class="a" style="left:27.6px;top:214.9px" width="8" height="8" viewBox="0 0 8 8"><path d="M0.8 7.5C1 4 2.5 1 4 1S6 3 6 5" stroke="#157a15" stroke-width="1.7" fill="none"/><path d="M1.5 5H5" stroke="#157a15" stroke-width="1.2"/><path d="M6.5 1.5V7.5" stroke="#157a15" stroke-width="1.6"/><circle cx="3.5" cy="2.5" r="0.8" fill="#5ac85a"/></svg>
<div class="t" style="left:40.20px;top:215.40px;font-size:7.8px;color:#111;letter-spacing:0.000px;transform:scaleX(0.8695);transform-origin:0.00px 0;font-weight:bold;">coxa_modif_renforce</div>
<div class="a" style="left:1px;top:269.5px;width:151px;height:133px;background:#fff;border:1px solid #bcbcbc"></div>
<div class="a" style="left:2px;top:270.5px;width:149px;height:13.5px;background:#fff"></div>
<div class="a" style="left:60.5px;top:271px;width:1px;height:12px;background:#e4e4e4"></div>
<div class="t" style="left:5.50px;top:273.60px;font-size:7.8px;color:#111;letter-spacing:0.000px;transform:scaleX(0.8688);transform-origin:0.00px 0;">Propriété</div>
<div class="t" style="left:64.00px;top:273.60px;font-size:7.8px;color:#111;letter-spacing:0.000px;transform:scaleX(0.9561);transform-origin:0.00px 0;">Valeur</div>
<div class="a" style="left:2px;top:284px;width:149px;height:10.5px;background:#a0a0a0"></div>
<div class="t" style="left:16.50px;top:286.60px;font-size:7.8px;color:#f8f8f8;letter-spacing:0.000px;transform:scaleX(0.8043);transform-origin:0.00px 0;font-weight:bold;">Base</div>
<div class="a" style="left:14px;top:305.5px;width:137px;height:1px;background:#e2e2e2"></div>
<div class="a" style="left:60.5px;top:295px;width:1px;height:11.5px;background:#e8e8e8"></div>
<svg class="a" style="left:7px;top:297.95px" width="4" height="6" viewBox="0 0 4 6"><path d="M0.7 0.7L3.2 3L0.7 5.3" stroke="#8a8a8a" stroke-width="1.2" fill="none"/></svg>
<div class="t" style="left:16.50px;top:297.90px;font-size:7.8px;color:#111;letter-spacing:0.000px;transform:scaleX(0.8652);transform-origin:0.00px 0;">Mesh</div>
<div class="t" style="left:63.20px;top:297.90px;font-size:7.8px;color:#111;letter-spacing:0.000px;transform:scaleX(0.8466);transform-origin:0.00px 0;">[Points : 18544, Arêtes : 55...</div>
<div class="a" style="left:14px;top:317px;width:137px;height:1px;background:#e2e2e2"></div>
<div class="a" style="left:60.5px;top:306.5px;width:1px;height:11.5px;background:#e8e8e8"></div>
<svg class="a" style="left:6px;top:309.95px" width="6" height="4" viewBox="0 0 6 4"><path d="M0.6 0.6L3 3L5.4 0.6" stroke="#222" stroke-width="1.3" fill="none"/></svg>
<div class="t" style="left:16.70px;top:309.70px;font-size:7.8px;color:#111;letter-spacing:0.000px;transform:scaleX(0.8845);transform-origin:0.00px 0;">Placement</div>
<div class="t" style="left:63.20px;top:309.70px;font-size:7.8px;color:#111;letter-spacing:0.000px;transform:scaleX(0.8393);transform-origin:0.00px 0;">[(1,00 -0,02 0,05); 24,4822 ...</div>
<div class="a" style="left:26.5px;top:318px;width:124.5px;height:12px;background:#f2f2f2"></div>
<div class="a" style="left:26px;top:329px;width:125px;height:1px;background:#e2e2e2"></div>
<div class="a" style="left:60.5px;top:318px;width:1px;height:12px;background:#e8e8e8"></div>
<div class="t" style="left:28.00px;top:321.70px;font-size:7.8px;color:#111;letter-spacing:0.000px;transform:scaleX(0.9021);transform-origin:0.00px 0;">Angle</div>
<div class="t" style="left:63.20px;top:321.70px;font-size:7.8px;color:#111;letter-spacing:0.000px;transform:scaleX(0.7824);transform-origin:0.00px 0;">24,4822 °</div>
<div class="a" style="left:26.5px;top:330px;width:34px;height:12px;background:#efefef"></div>
<div class="a" style="left:26px;top:341px;width:125px;height:1px;background:#e2e2e2"></div>
<div class="a" style="left:60.5px;top:330px;width:1px;height:12px;background:#e8e8e8"></div>
<svg class="a" style="left:18.7px;top:333.2px" width="4" height="6" viewBox="0 0 4 6"><path d="M0.7 0.7L3.2 3L0.7 5.3" stroke="#8a8a8a" stroke-width="1.2" fill="none"/></svg>
<div class="t" style="left:28.00px;top:333.10px;font-size:7.8px;color:#111;letter-spacing:0.000px;transform:scaleX(0.8144);transform-origin:0.00px 0;">Axis</div>
<div class="t" style="left:63.20px;top:333.10px;font-size:7.8px;color:#111;letter-spacing:0.000px;transform:scaleX(0.8414);transform-origin:0.00px 0;">[1,00 -0,02 0,05]</div>
<div class="a" style="left:26px;top:352.5px;width:125px;height:1px;background:#e2e2e2"></div>
<div class="a" style="left:60.5px;top:342px;width:1px;height:11.5px;background:#e8e8e8"></div>
<svg class="a" style="left:18.7px;top:344.95px" width="4" height="6" viewBox="0 0 4 6"><path d="M0.7 0.7L3.2 3L0.7 5.3" stroke="#8a8a8a" stroke-width="1.2" fill="none"/></svg>
<div class="t" style="left:28.00px;top:344.80px;font-size:7.8px;color:#111;letter-spacing:0.000px;transform:scaleX(0.9116);transform-origin:0.00px 0;">Position</div>
<div class="t" style="left:63.20px;top:344.80px;font-size:7.8px;color:#111;letter-spacing:0.000px;transform:scaleX(0.8856);transform-origin:0.00px 0;">[-2,72329 mm  -11,627 m...</div>
<div class="a" style="left:14px;top:364px;width:137px;height:1px;background:#e2e2e2"></div>
<div class="a" style="left:60.5px;top:353.5px;width:1px;height:11.5px;background:#e8e8e8"></div>
<div class="t" style="left:16.70px;top:356.40px;font-size:7.8px;color:#111;letter-spacing:0.000px;transform:scaleX(0.8383);transform-origin:0.00px 0;">Label</div>
<div class="t" style="left:63.20px;top:356.40px;font-size:7.8px;color:#111;letter-spacing:0.000px;transform:scaleX(0.9222);transform-origin:0.00px 0;">tibia_modif</div>
<svg class="a" style="left:0px;top:402px" width="66" height="11" viewBox="0 0 66 11"><path d="M1.5 1.5 C2.5 4 3 7 4.5 9 H21 C22 9 22.5 8.5 23 7 L25 1.5" stroke="#666" stroke-width="0.8" fill="#f4f4f4"/><path d="M25.5 1.5 L28 8.5 C28.5 9.5 29 10 30 10 H59 C60 10 60.5 9.5 61 8.5 L63.5 1.5" stroke="#666" stroke-width="0.8" fill="#f0f0f0"/></svg>
<div class="t" style="left:8.00px;top:403.21px;font-size:7.2px;color:#111;letter-spacing:0.000px;transform:scaleX(0.7973);transform-origin:0.00px 0;">Vue</div>
<div class="t" style="left:32.50px;top:404.21px;font-size:7.2px;color:#111;letter-spacing:0.000px;transform:scaleX(0.8501);transform-origin:0.00px 0;">Données</div>
<div class="a" style="left:159px;top:110px;width:634px;height:290px;background:linear-gradient(#383666,#a9a9c1)"></div>
<div class="a" style="left:159px;top:110px;width:634px;height:1.5px;background:#34325e"></div>
<div class="a" style="left:159px;top:400px;width:634px;height:14px;background:#f0f0f0"></div>
<div class="a" style="left:160px;top:401px;width:66px;height:12px;background:#f4f4f4;border:1px solid #dcdcdc;border-top:none"></div>
<div class="a" style="left:226px;top:401px;width:77px;height:12px;background:#f4f4f4;border-right:1px solid #dcdcdc"></div>
<div class="a" style="left:303px;top:400.5px;width:79px;height:13px;background:#fafafa"></div>
<div class="a" style="left:382px;top:401px;width:80px;height:12px;background:#f4f4f4;border-right:1px solid #dcdcdc"></div>
<svg class="a" style="left:167px;top:402.5px" width="9" height="9" viewBox="0 0 16 16"><circle cx="8" cy="8" r="7" fill="#2e6cc8"/><path d="M3 6c2-1 3 1 5 0s2-3 4-2M4 11c2 0 3-2 5-1" stroke="#bfe0ff" stroke-width="1.6" fill="none"/></svg>
<div class="t" style="left:177.80px;top:404.00px;font-size:7.8px;color:#111;letter-spacing:0.000px;transform:scaleX(0.8169);transform-origin:0.00px 0;">Start page</div>
<svg class="a" style="left:210.6px;top:403.5px" width="8" height="8" viewBox="0 0 8 8"><rect width="8" height="8" fill="#cfcfcf"/><path d="M2 2l4 4M6 2L2 6" stroke="#fff" stroke-width="1.2"/></svg>
<svg class="a" style="left:234px;top:403.5px" width="8" height="8" viewBox="0 0 10 10"><path d="M0.3 0.3h5.6v2.3H2.7v1.5h2.6v2.2H2.7v3.9H0.3z" fill="#c4301c"/><circle cx="6.3" cy="6.3" r="2.4" fill="#fff" stroke="#1a3692" stroke-width="1.9"/><path d="M6.3 2.9v1M6.3 8.7v1M2.9 6.3h1M8.7 6.3h1" stroke="#1a3692" stroke-width="1.2"/></svg>
<div class="t" style="left:244.60px;top:404.00px;font-size:7.8px;color:#111;letter-spacing:0.000px;transform:scaleX(0.8470);transform-origin:0.00px 0;">Unnamed : 1*</div>
<svg class="a" style="left:287.4px;top:403.5px" width="8" height="8" viewBox="0 0 8 8"><rect width="8" height="8" fill="#cfcfcf"/><path d="M2 2l4 4M6 2L2 6" stroke="#fff" stroke-width="1.2"/></svg>
<svg class="a" style="left:310.8px;top:403.5px" width="8" height="8" viewBox="0 0 10 10"><path d="M0.3 0.3h5.6v2.3H2.7v1.5h2.6v2.2H2.7v3.9H0.3z" fill="#c4301c"/><circle cx="6.3" cy="6.3" r="2.4" fill="#fff" stroke="#1a3692" stroke-width="1.9"/><path d="M6.3 2.9v1M6.3 8.7v1M2.9 6.3h1M8.7 6.3h1" stroke="#1a3692" stroke-width="1.2"/></svg>
<div class="t" style="left:321.60px;top:404.00px;font-size:7.8px;color:#111;letter-spacing:0.000px;transform:scaleX(0.8302);transform-origin:0.00px 0;">Unnamed1 : 1*</div>
<svg class="a" style="left:367.2px;top:404.2px" width="8" height="8" viewBox="0 0 8 8"><rect width="8" height="8" fill="#e06040"/><path d="M2 2l4 4M6 2L2 6" stroke="#fff" stroke-width="1.2"/></svg>
<svg class="a" style="left:390.7px;top:403.5px" width="8" height="8" viewBox="0 0 10 10"><path d="M0.3 0.3h5.6v2.3H2.7v1.5h2.6v2.2H2.7v3.9H0.3z" fill="#c4301c"/><circle cx="6.3" cy="6.3" r="2.4" fill="#fff" stroke="#1a3692" stroke-width="1.9"/><path d="M6.3 2.9v1M6.3 8.7v1M2.9 6.3h1M8.7 6.3h1" stroke="#1a3692" stroke-width="1.2"/></svg>
<div class="t" style="left:402.00px;top:404.00px;font-size:7.8px;color:#111;letter-spacing:0.000px;transform:scaleX(0.8225);transform-origin:0.00px 0;">Unnamed2 : 1*</div>
<svg class="a" style="left:448px;top:403.5px" width="8" height="8" viewBox="0 0 8 8"><rect width="8" height="8" fill="#cfcfcf"/><path d="M2 2l4 4M6 2L2 6" stroke="#fff" stroke-width="1.2"/></svg>
<div class="a" style="left:0px;top:414px;width:793px;height:12px;background:#f0f0f0"></div>
<div class="a" style="left:0px;top:425.2px;width:793px;height:1px;background:#fbfbfb"></div>
<div class="a" style="left:72px;top:415px;width:1px;height:10px;background:#dadada"></div>
<div class="a" style="left:0px;top:413.5px;width:157px;height:1px;background:#e4e4e4"></div>
<div class="a" style="left:155px;top:395px;width:1px;height:19px;background:#d8d8d8"></div>
<div class="t" style="left:711.25px;top:419.20px;font-size:7.8px;color:#222;letter-spacing:0.000px;transform:scaleX(0.8414);transform-origin:0.00px 0;">261,42 x 119,84 mm</div>
<div class="a" style="left:788px;top:417px;width:1px;height:9px;background:#d8d8d8"></div>
<div class="a" style="left:793px;top:0px;width:7px;height:426px;background:#e6e8ea"></div>
<div class="a" style="left:793px;top:0px;width:1.5px;height:426px;background:linear-gradient(90deg,#cfd1d4,#e2e4e6)"></div>
<div class="a" style="left:795px;top:28px;width:5px;height:1px;background:#d0d0d0"></div>
<div class="a" style="left:795px;top:77px;width:5px;height:1px;background:#d4d4d4"></div>
<div class="t" style="left:795.00px;top:16.91px;font-size:7.2px;color:#444;letter-spacing:0.000px;transform:scaleX(0.8743);transform-origin:0.00px 0;">on</div>
<div class="a" style="left:794px;top:414.4px;width:6px;height:11.6px;background:#2a6cc0"></div>
<div class="a" style="left:0px;top:426px;width:800px;height:24px;background:#101010"></div>
<div class="a" style="left:460px;top:426px;width:300px;height:24px;background:radial-gradient(ellipse 45px 9px at 95px 9px,rgba(80,80,80,.5),transparent),radial-gradient(ellipse 40px 8px at 200px 12px,rgba(75,75,75,.45),transparent),radial-gradient(ellipse 30px 7px at 30px 16px,rgba(60,60,60,.4),transparent),radial-gradient(ellipse 35px 6px at 150px 6px,rgba(60,60,60,.35),transparent)"></div>
<div class="a" style="left:0px;top:426px;width:28.5px;height:24px;background:#0b0b0b"></div>
<svg class="a" style="left:9px;top:433px" width="10" height="10" viewBox="0 0 10 10"><path d="M0 1.3L4.3 0.7V4.7H0zM4.9 0.6L10 0V4.7H4.9zM0 5.3H4.3V9.3L0 8.7zM4.9 5.3H10V10L4.9 9.4z" fill="#fff"/></svg>
<div class="a" style="left:28.5px;top:426.5px;width:201px;height:23.5px;background:#333333"></div>
<div class="t" style="left:35.30px;top:434.92px;font-size:8.6px;color:#b4b4b4;letter-spacing:0.000px;transform:scaleX(0.9954);transform-origin:0.00px 0;">Rechercher sur le web et dans Windows</div>
<svg class="a" style="left:237px;top:432px" width="14" height="11" viewBox="0 0 14 11"><rect x="3" y="1" width="8" height="9" fill="none" stroke="#fff" stroke-width="1"/><path d="M1 3v5M13 3v5" stroke="#fff" stroke-width="1"/></svg>
<svg class="a" style="left:266px;top:431px" width="13" height="13" viewBox="0 0 13 13"><path d="M11.5 9.5c-1 2-3 3-5 3-3 0-5.5-2-5.5-5.5C1 3 4 0.5 7 0.5c3.5 0 5.5 2.5 5.5 5.5v1H4c0 2 1.5 3 3 3s2.5-.5 3-1z M4 5h5.5c-.3-1.5-1.3-2.5-2.8-2.5S4.3 3.5 4 5z" fill="#1e90ff"/></svg>
<svg class="a" style="left:295px;top:432px" width="14" height="11" viewBox="0 0 14 11"><path d="M0 1h5l1 1.5h8V11H0z" fill="#f2c94c"/><path d="M0 4h14v7H0z" fill="#f8d877"/><rect x="3" y="6" width="8" height="3" fill="#3aa0e0"/></svg>
<svg class="a" style="left:324px;top:430px" width="12" height="14" viewBox="0 0 12 14"><path d="M1 4h10v10H1z" fill="#fff"/><path d="M4 4V2.5a2 2 0 0 1 4 0V4" stroke="#fff" fill="none"/><path d="M3 6h2.5v2.5H3zM6.5 6H9v2.5H6.5zM3 9.5h2.5V12H3zM6.5 9.5H9V12H6.5z" fill="#1e1e1e"/></svg>
<svg class="a" style="left:352px;top:432px" width="12" height="11" viewBox="0 0 12 11"><rect x="0" y="0" width="12" height="11" fill="#6aa8e0"/><rect x="1.5" y="1.5" width="9" height="8" fill="#d0d8e8"/><path d="M4 3l5 2.5L4 8z" fill="#e07820"/></svg>
<svg class="a" style="left:380px;top:430.5px" width="14" height="14" viewBox="0 0 14 14"><circle cx="7" cy="7" r="6.5" fill="#db4437"/><path d="M7 7L1.4 3.8A6.5 6.5 0 0 0 4 12.6z" fill="#0f9d58"/><path d="M7 7l5.6-3.2A6.5 6.5 0 0 1 4 12.6z" fill="#ffcd40"/><path d="M1.4 3.8A6.5 6.5 0 0 1 12.6 3.8H7z" fill="#db4437"/><circle cx="7" cy="7" r="3" fill="#fff"/><circle cx="7" cy="7" r="2.2" fill="#4285f4"/></svg>
<div class="a" style="left:402px;top:426px;width:28px;height:24px;background:#3e3e3e"></div>
<svg class="a" style="left:408px;top:431px" width="15" height="14" viewBox="0 0 15 14"><path d="M0 0h7v3H3.5v2.5h3v3h-3V14H0z" fill="#d83020"/><circle cx="10" cy="9" r="4" fill="#1c3c9a"/><circle cx="10" cy="9" r="1.6" fill="#5b7ad8"/></svg>
<svg class="a" style="left:438px;top:431px" width="14" height="13" viewBox="0 0 14 13"><rect x="4" y="1" width="10" height="11" fill="#fff"/><path d="M6 4h6M6 6h6M6 8h6" stroke="#aac" stroke-width="0.8"/><rect x="0" y="2" width="8" height="9" fill="#2b579a"/><path d="M1.5 4l1 5 1.2-3.5 1.2 3.5 1-5" stroke="#fff" stroke-width="0.8" fill="none"/></svg>
<div class="a" style="left:376px;top:448px;width:24px;height:2px;background:#76b9ed"></div>
<div class="a" style="left:402px;top:448px;width:28px;height:2px;background:#76b9ed"></div>
<div class="a" style="left:432px;top:448px;width:24px;height:2px;background:#76b9ed"></div>
<svg class="a" style="left:705px;top:435px" width="8" height="5" viewBox="0 0 8 5"><path d="M0.5 4.5L4 1l3.5 3.5" stroke="#fff" stroke-width="1" fill="none"/></svg>
<svg class="a" style="left:718px;top:432px" width="10" height="10" viewBox="0 0 10 10"><path d="M0.5 0.5h9v6.5H5L3 9V7H0.5z" fill="#fff"/><path d="M2 2.5h6M2 4.5h6" stroke="#1e1e1e" stroke-width="0.8"/></svg>
<div class="t" style="left:734.00px;top:434.17px;font-size:7.6px;color:#f4f4f4;letter-spacing:0.000px;transform:scaleX(0.7895);transform-origin:0.00px 0;">FRA</div>
<div class="t" style="left:765.60px;top:429.17px;font-size:7.6px;color:#f4f4f4;letter-spacing:0.000px;transform:scaleX(0.8572);transform-origin:0.00px 0;">20:14</div>
<div class="t" style="left:756.90px;top:439.17px;font-size:7.6px;color:#f4f4f4;letter-spacing:0.000px;transform:scaleX(0.8860);transform-origin:0.00px 0;">12/06/2017</div>
<svg class="a" style="left:770px;top:368px" width="24" height="28" viewBox="0 0 24 28"><path d="M8.3 18V8.7" stroke="#1a1a70" stroke-width="1.3"/><path d="M8.3 18l5-2.7" stroke="#3a8a3a" stroke-width="0.9"/><path d="M8.3 18l8.2 5" stroke="#701a1a" stroke-width="1.3"/><text x="10" y="9" font-size="6" font-family="Liberation Sans" fill="#111">Z</text><text x="15.6" y="16" font-size="5.5" font-family="Liberation Sans" fill="#222">Y</text><text x="17.5" y="24" font-size="5.5" font-family="Liberation Sans" fill="#222">X</text></svg>
<svg class="a" style="left:0;top:0" width="800" height="450" viewBox="0 0 800 450"><defs><linearGradient id="wallg" gradientUnits="userSpaceOnUse" x1="420" y1="200" x2="480" y2="310"><stop offset="0" stop-color="#d8d826"/><stop offset="0.5" stop-color="#caca1e"/><stop offset="1" stop-color="#bcbc18"/></linearGradient><filter id="bl2" x="-20%" y="-20%" width="140%" height="140%"><feGaussianBlur stdDeviation="1.6"/></filter><filter id="bl1" x="-20%" y="-20%" width="140%" height="140%"><feGaussianBlur stdDeviation="0.7"/></filter></defs><path d="M380.5,172.4 C381.8,172.5 385.8,172.6 388.5,173.1 C391.2,173.6 394.4,174.6 397.0,175.4 C399.6,176.2 401.8,177.0 404.0,177.9 C406.2,178.8 407.3,179.4 410.0,180.8 C412.7,182.2 416.6,184.3 420.0,186.2 C423.4,188.1 427.2,190.1 430.5,192.3 C433.8,194.5 436.8,196.4 440.0,199.2 C443.2,202.0 446.7,205.1 450.0,208.9 C453.3,212.7 456.7,218.1 460.0,222.2 C463.3,226.3 466.7,230.1 470.0,233.3 C473.3,236.5 476.7,238.6 480.0,241.2 C483.3,243.8 486.7,246.4 490.0,248.9 C493.3,251.4 496.7,253.8 500.0,256.3 C503.3,258.8 506.7,261.5 510.0,264.0 C513.3,266.5 516.7,269.0 520.0,271.5 C523.3,274.0 527.1,276.8 530.0,279.0 C532.9,281.2 534.6,283.0 537.3,285.0 C539.9,287.0 543.0,288.9 545.9,291.1 C548.8,293.3 551.9,295.9 554.4,298.4 C556.9,300.8 559.2,303.1 560.6,305.8 C562.0,308.5 562.7,311.2 563.0,314.3 C563.3,317.4 563.0,321.1 562.4,324.1 C561.8,327.1 560.4,330.3 559.3,332.1 C558.2,333.9 556.3,334.6 555.7,335.1 L551.6,333.5 C550.5,332.7 547.6,330.3 545.0,328.5 C542.4,326.7 540.0,324.9 536.1,322.6 C532.2,320.3 526.6,317.3 521.9,314.6 C517.1,311.9 512.4,309.4 507.6,306.6 C502.9,303.8 497.8,300.4 493.4,297.7 C488.9,295.0 485.0,293.0 480.9,290.6 C476.8,288.2 472.4,286.2 468.5,283.5 C464.6,280.8 461.2,277.7 457.8,274.6 C454.4,271.5 449.5,266.4 447.8,264.8 L447,262 C445.0,262.0 439.5,263.2 435.0,262.0 C430.5,260.8 423.1,256.9 420.0,255.0 C416.9,253.1 417.2,251.2 416.7,250.5 L416.7,250.5 C415.8,249.3 412.8,245.8 411.0,243.5 C409.2,241.2 407.2,238.8 406.0,236.5 C404.8,234.2 404.0,232.1 403.5,229.5 C403.0,226.9 403.1,222.4 403.0,221.0 L403,221 C401.8,219.8 398.8,216.8 396.0,214.0 C393.2,211.2 386.9,208.4 386.0,204.0 C385.1,199.6 390.1,190.2 390.9,187.4 L384,185 L381,183.3 Z" fill="url(#wallg)"/><clipPath id="dclip"><path d="M380.5,172.4 C381.8,172.5 385.8,172.6 388.5,173.1 C391.2,173.6 394.4,174.6 397.0,175.4 C399.6,176.2 401.8,177.0 404.0,177.9 C406.2,178.8 407.3,179.4 410.0,180.8 C412.7,182.2 416.6,184.3 420.0,186.2 C423.4,188.1 427.2,190.1 430.5,192.3 C433.8,194.5 436.8,196.4 440.0,199.2 C443.2,202.0 446.7,205.1 450.0,208.9 C453.3,212.7 456.7,218.1 460.0,222.2 C463.3,226.3 466.7,230.1 470.0,233.3 C473.3,236.5 476.7,238.6 480.0,241.2 C483.3,243.8 486.7,246.4 490.0,248.9 C493.3,251.4 496.7,253.8 500.0,256.3 C503.3,258.8 506.7,261.5 510.0,264.0 C513.3,266.5 516.7,269.0 520.0,271.5 C523.3,274.0 527.1,276.8 530.0,279.0 C532.9,281.2 534.6,283.0 537.3,285.0 C539.9,287.0 544.5,290.1 545.9,291.1 L546,297 C544.5,296.9 539.7,297.6 537.0,296.5 C534.3,295.4 532.8,292.9 530.0,290.5 C527.2,288.1 523.3,284.8 520.0,282.0 C516.7,279.2 513.3,276.3 510.0,273.5 C506.7,270.7 503.3,268.0 500.0,265.3 C496.7,262.6 493.3,260.0 490.0,257.3 C486.7,254.6 483.3,252.0 480.0,249.3 C476.7,246.7 473.3,244.1 470.0,241.4 C466.7,238.7 463.3,235.7 460.0,233.0 C456.7,230.3 453.3,228.2 450.0,225.5 C446.7,222.8 443.3,220.3 440.0,217.0 C436.7,213.7 433.3,209.3 430.0,205.5 C426.7,201.7 423.0,197.3 420.0,194.0 C417.0,190.7 414.5,187.8 412.0,185.5 C409.5,183.2 407.5,181.7 405.0,180.3 C402.5,178.9 399.5,177.9 397.0,177.0 C394.5,176.1 392.7,175.5 390.0,174.9 C387.3,174.3 382.5,173.7 381.0,173.4 Z"/></clipPath><path d="M380.5,172.4 C381.8,172.5 385.8,172.6 388.5,173.1 C391.2,173.6 394.4,174.6 397.0,175.4 C399.6,176.2 401.8,177.0 404.0,177.9 C406.2,178.8 407.3,179.4 410.0,180.8 C412.7,182.2 416.6,184.3 420.0,186.2 C423.4,188.1 427.2,190.1 430.5,192.3 C433.8,194.5 436.8,196.4 440.0,199.2 C443.2,202.0 446.7,205.1 450.0,208.9 C453.3,212.7 456.7,218.1 460.0,222.2 C463.3,226.3 466.7,230.1 470.0,233.3 C473.3,236.5 476.7,238.6 480.0,241.2 C483.3,243.8 486.7,246.4 490.0,248.9 C493.3,251.4 496.7,253.8 500.0,256.3 C503.3,258.8 506.7,261.5 510.0,264.0 C513.3,266.5 516.7,269.0 520.0,271.5 C523.3,274.0 527.1,276.8 530.0,279.0 C532.9,281.2 534.6,283.0 537.3,285.0 C539.9,287.0 544.5,290.1 545.9,291.1 L546,297 C544.5,296.9 539.7,297.6 537.0,296.5 C534.3,295.4 532.8,292.9 530.0,290.5 C527.2,288.1 523.3,284.8 520.0,282.0 C516.7,279.2 513.3,276.3 510.0,273.5 C506.7,270.7 503.3,268.0 500.0,265.3 C496.7,262.6 493.3,260.0 490.0,257.3 C486.7,254.6 483.3,252.0 480.0,249.3 C476.7,246.7 473.3,244.1 470.0,241.4 C466.7,238.7 463.3,235.7 460.0,233.0 C456.7,230.3 453.3,228.2 450.0,225.5 C446.7,222.8 443.3,220.3 440.0,217.0 C436.7,213.7 433.3,209.3 430.0,205.5 C426.7,201.7 423.0,197.3 420.0,194.0 C417.0,190.7 414.5,187.8 412.0,185.5 C409.5,183.2 407.5,181.7 405.0,180.3 C402.5,178.9 399.5,177.9 397.0,177.0 C394.5,176.1 392.7,175.5 390.0,174.9 C387.3,174.3 382.5,173.7 381.0,173.4 Z" fill="#34340e"/><g clip-path="url(#dclip)"><path d="M381,173.4 C382.5,173.7 387.3,174.3 390.0,174.9 C392.7,175.5 394.5,176.1 397.0,177.0 C399.5,177.9 402.5,178.9 405.0,180.3 C407.5,181.7 409.5,183.2 412.0,185.5 C414.5,187.8 417.0,190.7 420.0,194.0 C423.0,197.3 426.7,201.7 430.0,205.5 C433.3,209.3 436.7,213.7 440.0,217.0 C443.3,220.3 446.7,222.8 450.0,225.5 C453.3,228.2 456.7,230.3 460.0,233.0 C463.3,235.7 466.7,238.7 470.0,241.4 C473.3,244.1 476.7,246.7 480.0,249.3 C483.3,252.0 486.7,254.6 490.0,257.3 C493.3,260.0 496.7,262.6 500.0,265.3 C503.3,268.0 506.7,270.7 510.0,273.5 C513.3,276.3 516.7,279.2 520.0,282.0 C523.3,284.8 527.2,288.1 530.0,290.5 C532.8,292.9 534.3,295.4 537.0,296.5 C539.7,297.6 544.5,296.9 546.0,297.0" stroke="#5e5e16" stroke-width="5" fill="none" filter="url(#bl2)"/></g><path d="M381,173.4 C382.5,173.7 387.3,174.3 390.0,174.9 C392.7,175.5 394.5,176.1 397.0,177.0 C399.5,177.9 402.5,178.9 405.0,180.3 C407.5,181.7 409.5,183.2 412.0,185.5 C414.5,187.8 417.0,190.7 420.0,194.0 C423.0,197.3 426.7,201.7 430.0,205.5 C433.3,209.3 436.7,213.7 440.0,217.0 C443.3,220.3 446.7,222.8 450.0,225.5 C453.3,228.2 456.7,230.3 460.0,233.0 C463.3,235.7 466.7,238.7 470.0,241.4 C473.3,244.1 476.7,246.7 480.0,249.3 C483.3,252.0 486.7,254.6 490.0,257.3 C493.3,260.0 496.7,262.6 500.0,265.3 C503.3,268.0 506.7,270.7 510.0,273.5 C513.3,276.3 516.7,279.2 520.0,282.0 C523.3,284.8 527.2,288.1 530.0,290.5 C532.8,292.9 535.8,295.5 537.0,296.5 L537,298 C534.2,295.9 525.7,289.6 520.0,285.5 C514.3,281.4 508.0,276.8 503.0,273.5 C498.0,270.2 493.8,267.8 490.0,265.5 C486.2,263.2 483.3,261.9 480.0,260.0 C476.7,258.1 473.3,256.1 470.0,254.0 C466.7,251.9 463.3,250.0 460.0,247.5 C456.7,245.0 453.3,242.1 450.0,239.0 C446.7,235.9 443.3,233.0 440.0,229.0 C436.7,225.0 433.3,219.3 430.0,215.0 C426.7,210.7 423.7,206.8 420.0,203.0 C416.3,199.2 411.5,195.1 408.0,192.5 C404.5,189.9 402.0,188.8 399.0,187.6 C396.0,186.4 392.9,186.2 390.0,185.4 C387.1,184.6 382.9,183.1 381.5,182.6 Z" fill="#e0e02e"/><path d="M390,175.6 C391.2,175.9 394.5,176.8 397.0,177.7 C399.5,178.6 402.5,179.6 405.0,181.0 C407.5,182.4 409.5,183.9 412.0,186.2 C414.5,188.5 417.0,191.4 420.0,194.7 C423.0,198.0 426.7,202.4 430.0,206.2 C433.3,210.0 436.7,214.4 440.0,217.7 C443.3,221.0 446.7,223.5 450.0,226.2 C453.3,228.9 456.7,231.0 460.0,233.7 C463.3,236.3 466.7,239.4 470.0,242.1 C473.3,244.8 476.7,247.3 480.0,250.0 C483.3,252.7 486.7,255.3 490.0,258.0 C493.3,260.7 496.7,263.3 500.0,266.0 C503.3,268.7 506.7,271.4 510.0,274.2 C513.3,277.0 516.7,279.9 520.0,282.7 C523.3,285.5 527.2,288.8 530.0,291.2 C532.8,293.6 535.8,296.2 537.0,297.2" stroke="#f4f466" stroke-width="1" fill="none"/><path d="M381.5,182.6 C382.9,183.1 387.1,184.6 390.0,185.4 C392.9,186.2 396.0,186.4 399.0,187.6 C402.0,188.8 404.5,189.9 408.0,192.5 C411.5,195.1 416.3,199.2 420.0,203.0 C423.7,206.8 426.7,210.7 430.0,215.0 C433.3,219.3 436.7,225.0 440.0,229.0 C443.3,233.0 446.7,235.9 450.0,239.0 C453.3,242.1 456.7,245.0 460.0,247.5 C463.3,250.0 466.7,251.9 470.0,254.0 C473.3,256.1 476.7,258.1 480.0,260.0 C483.3,261.9 486.2,263.2 490.0,265.5 C493.8,267.8 498.0,270.2 503.0,273.5 C508.0,276.8 514.3,281.4 520.0,285.5 C525.7,289.6 534.2,295.9 537.0,298.0" stroke="#8c8c16" stroke-width="1" fill="none" filter="url(#bl1)"/><path d="M420,203 C421.7,205.0 426.7,210.7 430.0,215.0 C433.3,219.3 436.7,225.0 440.0,229.0 C443.3,233.0 446.7,235.9 450.0,239.0 C453.3,242.1 456.7,245.0 460.0,247.5 C463.3,250.0 466.7,251.9 470.0,254.0 C473.3,256.1 476.7,258.1 480.0,260.0 C483.3,261.9 486.2,263.2 490.0,265.5 C493.8,267.8 498.0,270.2 503.0,273.5 C508.0,276.8 514.3,281.4 520.0,285.5 C525.7,289.6 534.2,295.9 537.0,298.0 L535.5,304.5 C532.7,302.4 524.2,296.1 518.5,292.0 C512.8,287.9 506.5,283.3 501.5,280.0 C496.5,276.7 492.3,274.2 488.5,272.0 C484.7,269.8 481.8,268.4 478.5,266.5 C475.2,264.6 471.8,262.6 468.5,260.5 C465.2,258.4 461.8,256.5 458.5,254.0 C455.2,251.5 451.8,248.6 448.5,245.5 C445.2,242.4 441.8,239.5 438.5,235.5 C435.2,231.5 431.8,225.8 428.5,221.5 C425.2,217.2 420.2,211.5 418.5,209.5 Z" fill="#acac16" opacity="0.75" filter="url(#bl1)"/><path d="M418.5,209.5 C420.2,211.5 425.2,217.2 428.5,221.5 C431.8,225.8 435.2,231.5 438.5,235.5 C441.8,239.5 445.2,242.4 448.5,245.5 C451.8,248.6 455.2,251.5 458.5,254.0 C461.8,256.5 465.2,258.4 468.5,260.5 C471.8,262.6 475.2,264.6 478.5,266.5 C481.8,268.4 484.7,269.8 488.5,272.0 C492.3,274.2 496.5,276.7 501.5,280.0 C506.5,283.3 512.8,287.9 518.5,292.0 C524.2,296.1 532.7,302.4 535.5,304.5" stroke="#a8a818" stroke-width="0.8" fill="none" opacity="0.8"/><path d="M551.6,333.5 C550.5,332.7 547.6,330.3 545.0,328.5 C542.4,326.7 540.0,324.9 536.1,322.6 C532.2,320.3 526.6,317.3 521.9,314.6 C517.1,311.9 512.4,309.4 507.6,306.6 C502.9,303.8 497.8,300.4 493.4,297.7 C488.9,295.0 485.0,293.0 480.9,290.6 C476.8,288.2 472.4,286.2 468.5,283.5 C464.6,280.8 461.2,277.7 457.8,274.6 C454.4,271.5 449.5,266.4 447.8,264.8" stroke="#6e6e10" stroke-width="1.1" fill="none" transform="translate(0,-0.6)" filter="url(#bl1)"/><path d="M380.3,172.4 C380,176 380.2,180 380.6,183.4 C383,186 386,188.5 389.5,190 L393.5,186.8 C389,185.8 385,184.8 382,183 C381.6,179 381.5,176 381.5,172.8 Z" fill="#3e3e0e"/><linearGradient id="wsh" gradientUnits="userSpaceOnUse" x1="418" y1="0" x2="515" y2="0"><stop offset="0" stop-color="#8a8a10" stop-opacity="0"/><stop offset="0.3" stop-color="#8a8a10" stop-opacity="0.8"/><stop offset="0.6" stop-color="#9a9a12" stop-opacity="0.5"/><stop offset="1" stop-color="#a8a814" stop-opacity="0"/></linearGradient><path d="M418,222 L430,218 L440,229.5 L450,239.5 L460,248 L470,254.5 L480,260.5 L490,266 L515,281 L515,309 L493.4,297.7 L480.9,290.6 L468.5,283.5 L457.8,274.6 L447.8,264.8 L430,255 L418,250 Z" fill="url(#wsh)"/><path d="M390.9,187.4 L399.8,189.7 Q405,191.5 408.7,195.2 L414.2,200.8 Q414.8,206 412,211.5 L408.7,216.3 Q404,219 399.8,219.7 L388.7,220.5 Q383.5,220 381,216.5 Q377.5,212 378,207 Q378.5,201 383.1,196.3 Z" transform="translate(0.6,3.4)" fill="#a6a614" stroke="#5e5e12" stroke-width="0.7" stroke-opacity="0.55"/><path d="M390.9,187.4 L399.8,189.7 Q405,191.5 408.7,195.2 L414.2,200.8 Q414.8,206 412,211.5 L408.7,216.3 Q404,219 399.8,219.7 L388.7,220.5 Q383.5,220 381,216.5 Q377.5,212 378,207 Q378.5,201 383.1,196.3 Z" fill="#dcdc26"/><ellipse cx="393.7" cy="207.5" rx="4.2" ry="3.1" fill="#5e5e18"/><ellipse cx="394" cy="207.8" rx="2.6" ry="1.9" fill="#b4b434"/><path d="M391.5,209 L396,206.5" stroke="#6a6a18" stroke-width="0.8"/><circle cx="385.3" cy="203" r="0.6" fill="#7a7a1a"/><circle cx="399.8" cy="211" r="0.6" fill="#7a7a1a"/><path d="M423,242.6 L443.5,248.6 Q447.5,250 447.5,254.5 L447.3,263.3 Q446.5,268 440,272.7 L432,276 Q426,278.3 420,278.3 Q412,278 408,272.5 Q405.5,268.5 406.4,264.7 Q407.3,260 409.3,256.7 Q412,252.5 416.7,250 Z" transform="translate(0.4,4.3)" fill="#a4a414" stroke="#5e5e12" stroke-width="0.7" stroke-opacity="0.55"/><path d="M423,242.6 L443.5,248.6 Q447.5,250 447.5,254.5 L447.3,263.3 Q446.5,268 440,272.7 L432,276 Q426,278.3 420,278.3 Q412,278 408,272.5 Q405.5,268.5 406.4,264.7 Q407.3,260 409.3,256.7 Q412,252.5 416.7,250 Z" fill="#dcdc28"/><ellipse cx="422.7" cy="265" rx="4.2" ry="3.1" fill="#5e5e18"/><ellipse cx="423" cy="265.3" rx="2.6" ry="1.9" fill="#b4b434"/><path d="M420.5,266.5 L425,264" stroke="#6a6a18" stroke-width="0.8"/><circle cx="415.5" cy="260.5" r="0.6" fill="#7a7a1a"/><circle cx="429.5" cy="268.5" r="0.6" fill="#7a7a1a"/><path d="M537.3,285 C538.7,286.0 543.0,288.9 545.9,291.1 C548.8,293.3 551.9,295.9 554.4,298.4 C556.9,300.8 559.2,303.1 560.6,305.8 C562.0,308.5 562.7,311.2 563.0,314.3 C563.3,317.4 563.0,321.1 562.4,324.1 C561.8,327.1 560.4,330.3 559.3,332.1 C558.2,333.9 557.1,334.8 555.7,335.1 C554.3,335.4 551.6,334.1 550.8,333.9 L550,331.5 C550.5,330.9 552.4,329.4 553.2,327.8 C554.0,326.2 554.6,324.1 554.6,321.7 C554.6,319.3 553.9,315.6 553.0,313.5 C552.1,311.4 550.6,310.2 549.0,309.0 C547.4,307.8 545.1,307.2 543.5,306.5 C541.9,305.8 540.2,305.2 539.5,305.0 Z" fill="#d6d626"/><path d="M550,331.5 C550.5,330.9 552.4,329.4 553.2,327.8 C554.0,326.2 554.6,324.1 554.6,321.7 C554.6,319.3 553.9,315.6 553.0,313.5 C552.1,311.4 550.6,310.2 549.0,309.0 C547.4,307.8 545.1,307.2 543.5,306.5 C541.9,305.8 540.2,305.2 539.5,305.0" stroke="#48480e" stroke-width="2.2" fill="none" filter="url(#bl1)"/><path d="M535,292.3 C536.2,293.2 539.7,296.6 542.2,297.5 C544.7,298.4 547.8,297.0 550.0,298.0 C552.2,299.0 554.1,301.2 555.5,303.5 C556.9,305.8 557.8,308.6 558.3,311.5 C558.8,314.4 559.1,318.0 558.8,321.0 C558.5,324.0 557.5,327.3 556.5,329.5 C555.5,331.7 553.2,333.2 552.5,334.0" stroke="#ecec4a" stroke-width="1.3" fill="none" filter="url(#bl1)"/></svg>
</body></html>
